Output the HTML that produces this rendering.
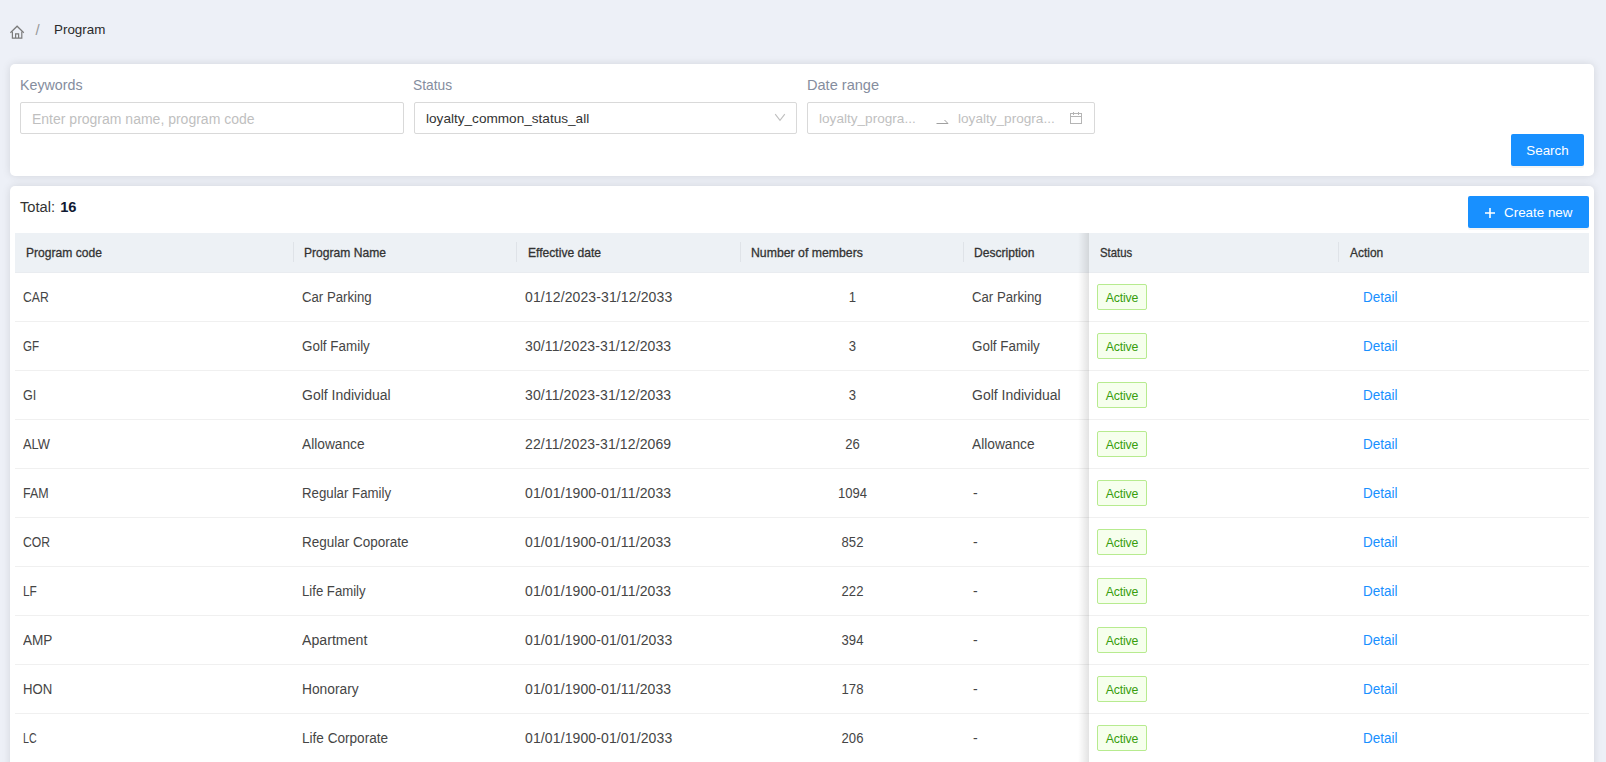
<!DOCTYPE html><html><head><meta charset="utf-8"><title>Program</title><style>
*{box-sizing:border-box;margin:0;padding:0}
html,body{width:1606px;height:762px;overflow:hidden}
body{background:#edf0f7;font-family:"Liberation Sans",sans-serif;position:relative;color:#333}
.abs{position:absolute;white-space:nowrap}
.card{position:absolute;background:#fff;border-radius:5px;box-shadow:0 0 8px rgba(0,0,0,.115)}
.lbl{position:absolute;font-size:14.8px;color:#858d9e;line-height:20px;transform-origin:0 15px;white-space:nowrap}
.inp{position:absolute;top:102px;height:32px;border:1px solid #d9d9d9;border-radius:2px;background:#fff}
.ph{position:absolute;top:1px;font-size:14px;color:#bfbfbf;line-height:30px;white-space:nowrap}
.btn{position:absolute;background:#1890ff;color:#fff;border-radius:2px;box-shadow:0 2px 0 rgba(0,0,0,.045);font-size:13.4px;line-height:34px;height:32px;text-align:center;white-space:nowrap}
.thead{position:absolute;left:15px;top:233px;width:1574px;height:40px;background:#edf1f5;border-bottom:1px solid #e9ecf0}
.th{position:absolute;top:0;height:40px;line-height:40px;font-size:12.6px;font-weight:400;-webkit-text-stroke:0.3px #333;color:#333;white-space:nowrap;transform-origin:0 50%;transform:scaleX(.96)}
.sep{position:absolute;top:9px;width:1px;height:20px;background:#dfe3e8}
.row{position:absolute;left:15px;width:1574px;height:49px;border-bottom:1px solid #f0f0f0}
.td{position:absolute;top:0px;height:48px;line-height:48px;font-size:14px;color:#454545;white-space:nowrap;transform-origin:0 50%}
.tag{position:absolute;left:1082px;top:11px;width:50px;height:26px;border:1px solid #b7eb8f;background:#f6ffed;color:#389e0d;border-radius:2px;font-size:12.3px;line-height:24px;text-align:center;letter-spacing:-0.15px}
.det{position:absolute;left:1348px;top:0px;line-height:48px;font-size:14px;color:#1890ff;transform-origin:0 50%;transform:scaleX(.96)}
.shadow{position:absolute;left:1063px;width:11px;background:linear-gradient(to right,rgba(0,0,0,0),rgba(0,0,0,.11))}
</style></head><body>
<svg class="abs" style="left:6px;top:20px" width="24" height="24" viewBox="6 20 24 24" fill="none" stroke="#7a7a7a" stroke-width="1.2" stroke-linejoin="miter"><path d="M10.4 32.7 L17.1 26.2 L23.8 32.7"/><path d="M12.4 31.6 V38.1 H21.8 V31.6"/><path d="M15.6 38.1 V33.9 H18.6 V38.1"/></svg>
<div class="abs" style="left:35.5px;top:20px;font-size:15px;line-height:20px;color:#999">/</div>
<div class="abs" style="left:54px;top:20px;font-size:13.4px;line-height:20px;color:#2a2a2a">Program</div>
<div class="card" style="left:10px;top:64px;width:1584px;height:112px"></div>
<div class="lbl" style="left:20px;top:75px;transform:scaleX(.963)">Keywords</div>
<div class="lbl" style="left:413px;top:75px;transform:scaleX(.932)">Status</div>
<div class="lbl" style="left:807px;top:75px;transform:scaleX(.984)">Date range</div>
<div class="inp" style="left:20px;width:384px"><div class="ph" style="left:11px">Enter program name, program code</div></div>
<div class="inp" style="left:414px;width:383px"><div class="ph" style="left:11px;color:#333;font-size:13.6px">loyalty_common_status_all</div><svg class="abs" style="left:359px;top:10px" width="12" height="9" viewBox="0 0 12 9" fill="none" stroke="#bfbfbf" stroke-width="1.1"><path d="M1.2 1.2 L6 7.3 L10.8 1.2"/></svg></div>
<div class="inp" style="left:807px;width:288px"><div class="ph" style="left:11px;font-size:13.6px">loyalty_progra...</div><svg class="abs" style="left:128px;top:16px" width="14" height="6" viewBox="0 0 14 6" fill="none" stroke="#a0a0a0" stroke-width="1"><path d="M0.5 4.5 H12 L8.5 1"/></svg><div class="ph" style="left:150px;font-size:13.6px">loyalty_progra...</div><svg class="abs" style="left:261px;top:8px" width="14" height="14" viewBox="0 0 14 14" fill="none" stroke="#b5b5b5" stroke-width="1"><rect x="1.5" y="2.5" width="11" height="10"/><path d="M1.5 5.5 H12.5"/><path d="M4.5 1 V4 M9.5 1 V4"/></svg></div>
<div class="btn" style="left:1511px;top:134px;width:73px">Search</div>
<div class="card" style="left:10px;top:186px;width:1584px;height:600px"></div>
<div class="abs" style="left:20px;top:197px;font-size:14.7px;line-height:20px;color:#333">Total: <b style="color:#111a33;margin-left:1px">16</b></div>
<div class="btn" style="left:1468px;top:196px;width:121px"><svg style="position:absolute;left:17px;top:12px" width="10" height="10" viewBox="0 0 10 10" fill="none" stroke="#fff" stroke-width="1.6"><path d="M5 0 V10 M0 5 H10"/></svg><span style="position:absolute;left:36px">Create new</span></div>
<div class="thead">
<div class="th" style="left:11px;transform:scaleX(0.96)">Program code</div>
<div class="th" style="left:289px;transform:scaleX(0.96)">Program Name</div>
<div class="th" style="left:513px;transform:scaleX(0.96)">Effective date</div>
<div class="th" style="left:736px;transform:scaleX(0.975)">Number of members</div>
<div class="th" style="left:959px;transform:scaleX(0.96)">Description</div>
<div class="th" style="left:1085px;transform:scaleX(0.9)">Status</div>
<div class="th" style="left:1335px;transform:scaleX(0.95)">Action</div>
<div class="sep" style="left:278px"></div>
<div class="sep" style="left:501px"></div>
<div class="sep" style="left:725px"></div>
<div class="sep" style="left:948px"></div>
<div class="sep" style="left:1323px"></div>
</div>
<div class="row" style="top:273px">
<div class="td" style="left:8px;transform:scaleX(0.87)">CAR</div>
<div class="td" style="left:287px;transform:scaleX(0.942)">Car Parking</div>
<div class="td" style="left:510px;letter-spacing:0.12px">01/12/2023-31/12/2033</div>
<div class="td" style="left:726px;width:223px;text-align:center;transform-origin:50% 50%;transform:scaleX(.935)">1</div>
<div class="td" style="left:957px;transform:scaleX(0.942)">Car Parking</div>
<div class="tag"><span style="position:relative;top:1px">Active</span></div>
<div class="det">Detail</div>
</div>
<div class="row" style="top:322px">
<div class="td" style="left:8px;transform:scaleX(0.83)">GF</div>
<div class="td" style="left:287px;transform:scaleX(0.958)">Golf Family</div>
<div class="td" style="left:510px;letter-spacing:0.12px">30/11/2023-31/12/2033</div>
<div class="td" style="left:726px;width:223px;text-align:center;transform-origin:50% 50%;transform:scaleX(.935)">3</div>
<div class="td" style="left:957px;transform:scaleX(0.958)">Golf Family</div>
<div class="tag"><span style="position:relative;top:1px">Active</span></div>
<div class="det">Detail</div>
</div>
<div class="row" style="top:371px">
<div class="td" style="left:8px;transform:scaleX(0.9)">GI</div>
<div class="td" style="left:287px;transform:scaleX(0.999)">Golf Individual</div>
<div class="td" style="left:510px;letter-spacing:0.12px">30/11/2023-31/12/2033</div>
<div class="td" style="left:726px;width:223px;text-align:center;transform-origin:50% 50%;transform:scaleX(.935)">3</div>
<div class="td" style="left:957px;transform:scaleX(0.999)">Golf Individual</div>
<div class="tag"><span style="position:relative;top:1px">Active</span></div>
<div class="det">Detail</div>
</div>
<div class="row" style="top:420px">
<div class="td" style="left:8px;transform:scaleX(0.92)">ALW</div>
<div class="td" style="left:287px;transform:scaleX(0.981)">Allowance</div>
<div class="td" style="left:510px;letter-spacing:0.12px">22/11/2023-31/12/2069</div>
<div class="td" style="left:726px;width:223px;text-align:center;transform-origin:50% 50%;transform:scaleX(.935)">26</div>
<div class="td" style="left:957px;transform:scaleX(0.981)">Allowance</div>
<div class="tag"><span style="position:relative;top:1px">Active</span></div>
<div class="det">Detail</div>
</div>
<div class="row" style="top:469px">
<div class="td" style="left:8px;transform:scaleX(0.89)">FAM</div>
<div class="td" style="left:287px;transform:scaleX(0.946)">Regular Family</div>
<div class="td" style="left:510px;letter-spacing:0.12px">01/01/1900-01/11/2033</div>
<div class="td" style="left:726px;width:223px;text-align:center;transform-origin:50% 50%;transform:scaleX(.935)">1094</div>
<div class="td" style="left:958px;transform:scaleX(1)">-</div>
<div class="tag"><span style="position:relative;top:1px">Active</span></div>
<div class="det">Detail</div>
</div>
<div class="row" style="top:518px">
<div class="td" style="left:8px;transform:scaleX(0.87)">COR</div>
<div class="td" style="left:287px;transform:scaleX(0.964)">Regular Coporate</div>
<div class="td" style="left:510px;letter-spacing:0.12px">01/01/1900-01/11/2033</div>
<div class="td" style="left:726px;width:223px;text-align:center;transform-origin:50% 50%;transform:scaleX(.935)">852</div>
<div class="td" style="left:958px;transform:scaleX(1)">-</div>
<div class="tag"><span style="position:relative;top:1px">Active</span></div>
<div class="det">Detail</div>
</div>
<div class="row" style="top:567px">
<div class="td" style="left:8px;transform:scaleX(0.85)">LF</div>
<div class="td" style="left:287px;transform:scaleX(0.94)">Life Family</div>
<div class="td" style="left:510px;letter-spacing:0.12px">01/01/1900-01/11/2033</div>
<div class="td" style="left:726px;width:223px;text-align:center;transform-origin:50% 50%;transform:scaleX(.935)">222</div>
<div class="td" style="left:958px;transform:scaleX(1)">-</div>
<div class="tag"><span style="position:relative;top:1px">Active</span></div>
<div class="det">Detail</div>
</div>
<div class="row" style="top:616px">
<div class="td" style="left:8px;transform:scaleX(0.97)">AMP</div>
<div class="td" style="left:287px;transform:scaleX(1.012)">Apartment</div>
<div class="td" style="left:510px;letter-spacing:0.12px">01/01/1900-01/01/2033</div>
<div class="td" style="left:726px;width:223px;text-align:center;transform-origin:50% 50%;transform:scaleX(.935)">394</div>
<div class="td" style="left:958px;transform:scaleX(1)">-</div>
<div class="tag"><span style="position:relative;top:1px">Active</span></div>
<div class="det">Detail</div>
</div>
<div class="row" style="top:665px">
<div class="td" style="left:8px;transform:scaleX(0.94)">HON</div>
<div class="td" style="left:287px;transform:scaleX(0.984)">Honorary</div>
<div class="td" style="left:510px;letter-spacing:0.12px">01/01/1900-01/11/2033</div>
<div class="td" style="left:726px;width:223px;text-align:center;transform-origin:50% 50%;transform:scaleX(.935)">178</div>
<div class="td" style="left:958px;transform:scaleX(1)">-</div>
<div class="tag"><span style="position:relative;top:1px">Active</span></div>
<div class="det">Detail</div>
</div>
<div class="row" style="top:714px">
<div class="td" style="left:8px;transform:scaleX(0.76)">LC</div>
<div class="td" style="left:287px;transform:scaleX(0.97)">Life Corporate</div>
<div class="td" style="left:510px;letter-spacing:0.12px">01/01/1900-01/01/2033</div>
<div class="td" style="left:726px;width:223px;text-align:center;transform-origin:50% 50%;transform:scaleX(.935)">206</div>
<div class="td" style="left:958px;transform:scaleX(1)">-</div>
<div class="tag"><span style="position:relative;top:1px">Active</span></div>
<div class="det">Detail</div>
</div>
<div class="shadow" style="left:1078px;top:233px;height:529px"></div>
</body></html>
